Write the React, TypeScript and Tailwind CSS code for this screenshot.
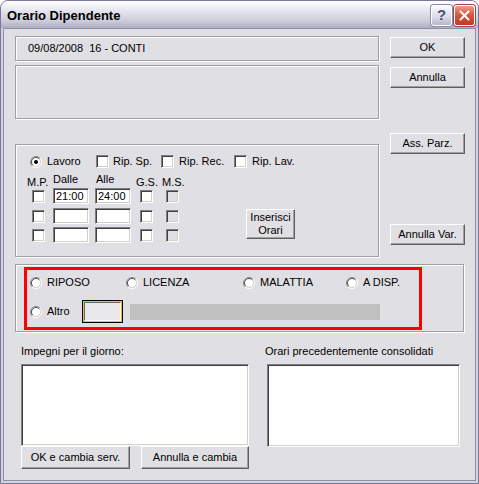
import React from "react";

const etched = "border border-[#a0a0a0] shadow-[inset_1px_1px_0_#fff,1px_1px_0_#fff]";
const sunken =
  "border border-t-[#808080] border-l-[#808080] border-b-white border-r-white shadow-[inset_1px_1px_0_#404040,inset_-1px_-1px_0_#d4d0c8]";
const raised =
  "bg-[#e0dfe3] border border-t-white border-l-white border-r-[#5f5f5f] border-b-[#5f5f5f] shadow-[inset_-1px_-1px_0_#a0a0a0]";

const Radio = ({ checked = false }: { checked?: boolean }) => (
  <svg width="12" height="12" viewBox="0 0 12 12" className="shrink-0">
    <circle cx="6" cy="6" r="4.5" fill="#fff" />
    <path d="M2.1 9.9 A5.5 5.5 0 0 1 9.9 2.1" fill="none" stroke="#8a8a8a" strokeWidth="1" />
    <path d="M9.9 2.1 A5.5 5.5 0 0 1 2.1 9.9" fill="none" stroke="#ffffff" strokeWidth="1" />
    <path d="M2.8 9.2 A4.5 4.5 0 0 1 9.2 2.8" fill="none" stroke="#505050" strokeWidth="1" />
    <path d="M9.2 2.8 A4.5 4.5 0 0 1 2.8 9.2" fill="none" stroke="#d4d0c8" strokeWidth="1" />
    {checked ? <circle cx="6" cy="6" r="2" fill="#000" /> : null}
  </svg>
);

const Check = ({ disabled = false }: { disabled?: boolean }) => (
  <div className={`w-[13px] h-[13px] shrink-0 ${sunken} ${disabled ? "bg-[#e0dfe3]" : "bg-white"}`} />
);

const TimeBox = ({ value }: { value?: string }) => (
  <div className={`w-[36px] h-[16px] bg-white pl-[2px] flex items-center ${sunken}`}>{value}</div>
);

const Btn = ({ label, cls }: { label: React.ReactNode; cls: string }) => (
  <div className={`${raised} ${cls} flex items-center justify-center text-center`}>{label}</div>
);

const App = () => {
  const timeRows = [
    { from: "21:00", to: "24:00" },
    { from: "", to: "" },
    { from: "", to: "" },
  ];

  return (
    <div className="w-[479px] h-[484px] font-['Liberation_Sans',Arial,sans-serif]">
      <div className="w-full h-full flex flex-col rounded-t-[8px] border border-[#77779a] bg-[#d3d3e0]">
        {/* title bar */}
        <div className="h-[27px] flex items-center pl-[6px] pr-[3px] pt-[2px] rounded-t-[7px] bg-[linear-gradient(to_bottom,#ffffff,#e6e6ee_35%,#d0d0dc_70%,#aeaec4)]">
          <span className="font-bold text-[13px] text-black flex-1">Orario Dipendente</span>
          <div className="w-[21px] h-[21px] rounded-[3px] border border-white bg-[linear-gradient(to_bottom,#fafafe,#dcdcea_55%,#b6b6cc)] flex items-center justify-center text-[15px] font-bold text-[#4d4d6d] shadow-[0_0_0_1px_#8c8ca8]">
            ?
          </div>
          <div className="ml-[2px] w-[21px] h-[21px] rounded-[3px] border border-white bg-[linear-gradient(to_bottom,#ee9a86,#d8523c_50%,#c03a22)] flex items-center justify-center shadow-[0_0_0_1px_#9a4a44]">
            <svg width="11" height="11" viewBox="0 0 11 11">
              <path d="M1.5 1.5 L9.5 9.5 M9.5 1.5 L1.5 9.5" stroke="#fff" strokeWidth="2" strokeLinecap="round" />
            </svg>
          </div>
        </div>

        {/* client */}
        <div className="flex-1 mx-[2px] mb-[2px] border border-[#8e8eaa] bg-[#e0dfe3] text-[11px] leading-[13px] text-black">
          <div className="flex pl-[11px] pt-[7px]">
            <div className="flex flex-col w-[364px]">
              <div className={`h-[25px] flex items-center pl-[12px] ${etched}`}>
                <span className="whitespace-pre">09/08/2008  16 - CONTI</span>
              </div>
              <div className={`mt-[4px] h-[54px] ${etched}`} />

              <div className={`mt-[25px] h-[113px] pt-[10px] ${etched}`}>
                <div className="flex items-center h-[13px] pl-[14px]">
                  <div className="w-[66px] flex items-center gap-[5px]">
                    <Radio checked />
                    <span>Lavoro</span>
                  </div>
                  <div className="w-[65px] flex items-center gap-[4px]">
                    <Check />
                    <span>Rip. Sp.</span>
                  </div>
                  <div className="w-[73px] flex items-center gap-[5px]">
                    <Check />
                    <span>Rip. Rec.</span>
                  </div>
                  <div className="flex items-center gap-[5px]">
                    <Check />
                    <span>Rip. Lav.</span>
                  </div>
                </div>

                <div className="mt-[5px] h-[15px] flex items-start pl-[11px]">
                  <span className="w-[26px] mt-[3px]">M.P.</span>
                  <span className="w-[43px]">Dalle</span>
                  <span className="w-[40px]">Alle</span>
                  <span className="w-[26px] mt-[3px]">G.S.</span>
                  <span className="mt-[3px]">M.S.</span>
                </div>

                <div className="flex">
                  <div className="flex flex-col pl-[16px]">
                    {timeRows.map((r, i) => (
                      <div key={i} className={`flex items-center h-[16px] ${i === 1 ? "mt-[4px]" : i === 2 ? "mt-[3px]" : ""}`}>
                        <Check />
                        <div className="ml-[8px]">
                          <TimeBox value={r.from} />
                        </div>
                        <div className="ml-[6px]">
                          <TimeBox value={r.to} />
                        </div>
                        <div className="ml-[9px]">
                          <Check />
                        </div>
                        <div className="ml-[13px]">
                          <Check disabled />
                        </div>
                      </div>
                    ))}
                  </div>
                  <Btn
                    cls="ml-[67px] mt-[21px] w-[49px] h-[30px]"
                    label={
                      <span>
                        Inserisci
                        <br />
                        Orari
                      </span>
                    }
                  />
                </div>
              </div>
            </div>

            <div className="ml-[11px] pt-[1px] flex flex-col">
              <Btn cls="w-[75px] h-[21px]" label="OK" />
              <Btn cls="mt-[9px] w-[75px] h-[21px]" label="Annulla" />
              <Btn cls="mt-[45px] w-[75px] h-[21px]" label="Ass. Parz." />
              <Btn cls="mt-[70px] w-[75px] h-[21px]" label="Annulla Var." />
            </div>
          </div>

          {/* absence type group */}
          <div className={`ml-[11px] mt-[7px] w-[449px] h-[68px] pt-[2px] pl-[8px] ${etched}`}>
            <div className="w-[398px] h-[63px] border-[3px] border-[#ff0000] pt-[6px] pl-[3px]">
              <div className="flex items-center h-[13px]">
                <div className="w-[96px] flex items-center gap-[5px]">
                  <Radio />
                  <span>RIPOSO</span>
                </div>
                <div className="w-[117px] flex items-center gap-[5px]">
                  <Radio />
                  <span>LICENZA</span>
                </div>
                <div className="w-[103px] flex items-center gap-[5px]">
                  <Radio />
                  <span>MALATTIA</span>
                </div>
                <div className="flex items-center gap-[5px]">
                  <Radio />
                  <span>A DISP.</span>
                </div>
              </div>
              <div className="mt-[11px] h-[23px] flex items-center">
                <div className="w-[52px] flex items-center gap-[5px]">
                  <Radio />
                  <span>Altro</span>
                </div>
                <div className="w-[41px] h-[23px] border border-black shadow-[inset_0_0_0_1px_#f2c200] p-[1px]">
                  <div className="w-full h-full border border-t-[#6a6a6a] border-l-[#6a6a6a] border-b-white border-r-white bg-[#e8e8ea]" />
                </div>
                <div className="ml-[7px] w-[250px] h-[16px] bg-[#c0c0c0]" />
              </div>
            </div>
          </div>

          {/* bottom lists */}
          <div className="flex pl-[17px] mt-[13px]">
            <div className="flex flex-col w-[228px]">
              <span>Impegni per il giorno:</span>
              <div className={`mt-[6px] h-[82px] bg-white ${sunken}`} />
              <div className="flex">
                <Btn cls="w-[109px] h-[23px]" label="OK e cambia serv." />
                <Btn cls="ml-[11px] w-[108px] h-[23px]" label="Annulla e cambia" />
              </div>
            </div>
            <div className="ml-[16px] flex flex-col">
              <span>Orari precedentemente consolidati</span>
              <div className={`ml-[2px] mt-[6px] w-[193px] h-[83px] bg-white ${sunken}`} />
            </div>
          </div>
        </div>
      </div>
    </div>
  );
};

export default App;
